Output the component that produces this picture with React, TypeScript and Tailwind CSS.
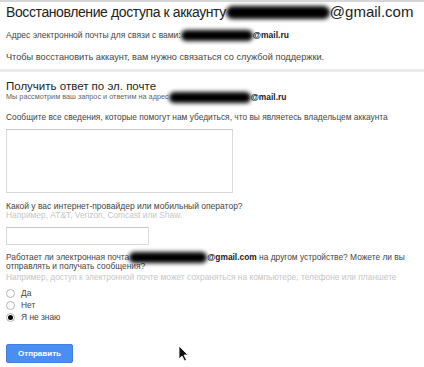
const Blob = ({ w, h }: { w: number; h: number }) => (
  <span
    className="inline-block shrink-0 bg-black rounded-full blur-[2px]"
    style={{ width: w, height: h }}
  />
);

export default function App() {
  return (
    <div className="relative w-[424px] h-[367px] overflow-hidden bg-white border-t-2 border-[#d6d6d6] font-['Liberation_Sans',Arial,sans-serif] text-[#444]">
      <div className="px-[6px] flex flex-col">
        <h1 className="h-[20px] text-[#222] whitespace-nowrap flex items-center">
          <span className="text-[14px] tracking-[-0.4px]">Восстановление доступа к аккаунту</span>
          <Blob w={104} h={13} />
          <span className="text-[15px]">@gmail.com</span>
        </h1>
        <p className="mt-[8px] h-[10px] text-[8.5px] whitespace-nowrap flex items-center">
          Адрес электронной почты для связи с вами:<Blob w={72} h={11} />
          <b className="text-[#222]">@mail.ru</b>
        </p>
        <p className="mt-[12px] h-[10px] text-[9.2px] leading-[10px] whitespace-nowrap">
          Чтобы восстановить аккаунт, вам нужно связаться со службой поддержки.
        </p>
      </div>
      <div className="mt-[7px] h-[3px] bg-[#ececec]" />
      <div className="px-[6px] flex flex-col">
        <h2 className="mt-[7px] h-[14px] text-[11.5px] leading-[14px] text-[#222] whitespace-nowrap">
          Получить ответ по эл. почте
        </h2>
        <p className="h-[9px] text-[7.3px] text-[#666] whitespace-nowrap flex items-center">
          Мы рассмотрим ваш запрос и ответим на адрес<Blob w={82} h={11} />
          <b className="text-[#222] text-[8.4px]">@mail.ru</b>
        </p>
        <p className="mt-[10px] h-[10px] text-[8.4px] leading-[10px] whitespace-nowrap">
          Сообщите все сведения, которые помогут нам убедиться, что вы являетесь владельцем аккаунта
        </p>
        <div className="relative mt-[7px] w-[227px] h-[64px] border border-[#dadada] border-t-[#c6c6c6]">
          <div className="absolute right-[1px] bottom-[1px] w-[6px] h-[6px] bg-[radial-gradient(#999_0.6px,transparent_0.7px)] bg-[length:2px_2px]" />
        </div>
        <p className="mt-[8px] h-[10px] text-[8.5px] leading-[10px] whitespace-nowrap">
          Какой у вас интернет-провайдер или мобильный оператор?
        </p>
        <p className="h-[9px] text-[8.4px] leading-[9px] text-[#c6c6c6] whitespace-nowrap">
          Например, AT&amp;T, Verizon, Comcast или Shaw.
        </p>
        <div className="mt-[7px] w-[143px] h-[18px] border border-[#dadada] border-t-[#c6c6c6]" />
        <p className="mt-[8px] h-[9px] text-[8.4px] whitespace-nowrap flex items-center">
          Работает ли электронная почта<Blob w={78} h={11} />
          <b className="text-[#222]">@gmail.com</b>&nbsp;на другом устройстве? Можете ли вы
        </p>
        <p className="h-[9px] text-[8.4px] leading-[9px] whitespace-nowrap">отправлять и получать сообщения?</p>
        <p className="mt-[1px] h-[10px] text-[8.4px] leading-[10px] text-[#c6c6c6] whitespace-nowrap">
          Например, доступ к электронной почте может сохраняться на компьютере, телефоне или планшете
        </p>
        <div className="mt-[6px] flex flex-col gap-[2px] text-[8.4px] leading-[10px]">
          {["Да", "Нет", "Я не знаю"].map((label, i) => (
            <label key={label} className="h-[10px] flex items-center gap-[6px]">
              <span className="w-[9px] h-[9px] rounded-full border border-[#b5b5b5] flex items-center justify-center bg-white">
                {i === 2 && <span className="w-[5px] h-[5px] rounded-full bg-black" />}
              </span>
              {label}
            </label>
          ))}
        </div>
        <button className="mt-[22px] w-[67px] h-[19px] bg-[#4a8ef2] border border-[#3f7fe0] rounded-[2px] text-white text-[8px] font-bold">
          Отправить
        </button>
      </div>
      <svg className="absolute left-[178px] top-[343px]" width="11" height="17" viewBox="0 0 11 17">
        <path d="M1 1 L1 14 L4 11 L6.5 16 L8.5 15 L6 10 L10 10 Z" fill="#111" stroke="#fff" strokeWidth="0.8" />
      </svg>
    </div>
  );
}
